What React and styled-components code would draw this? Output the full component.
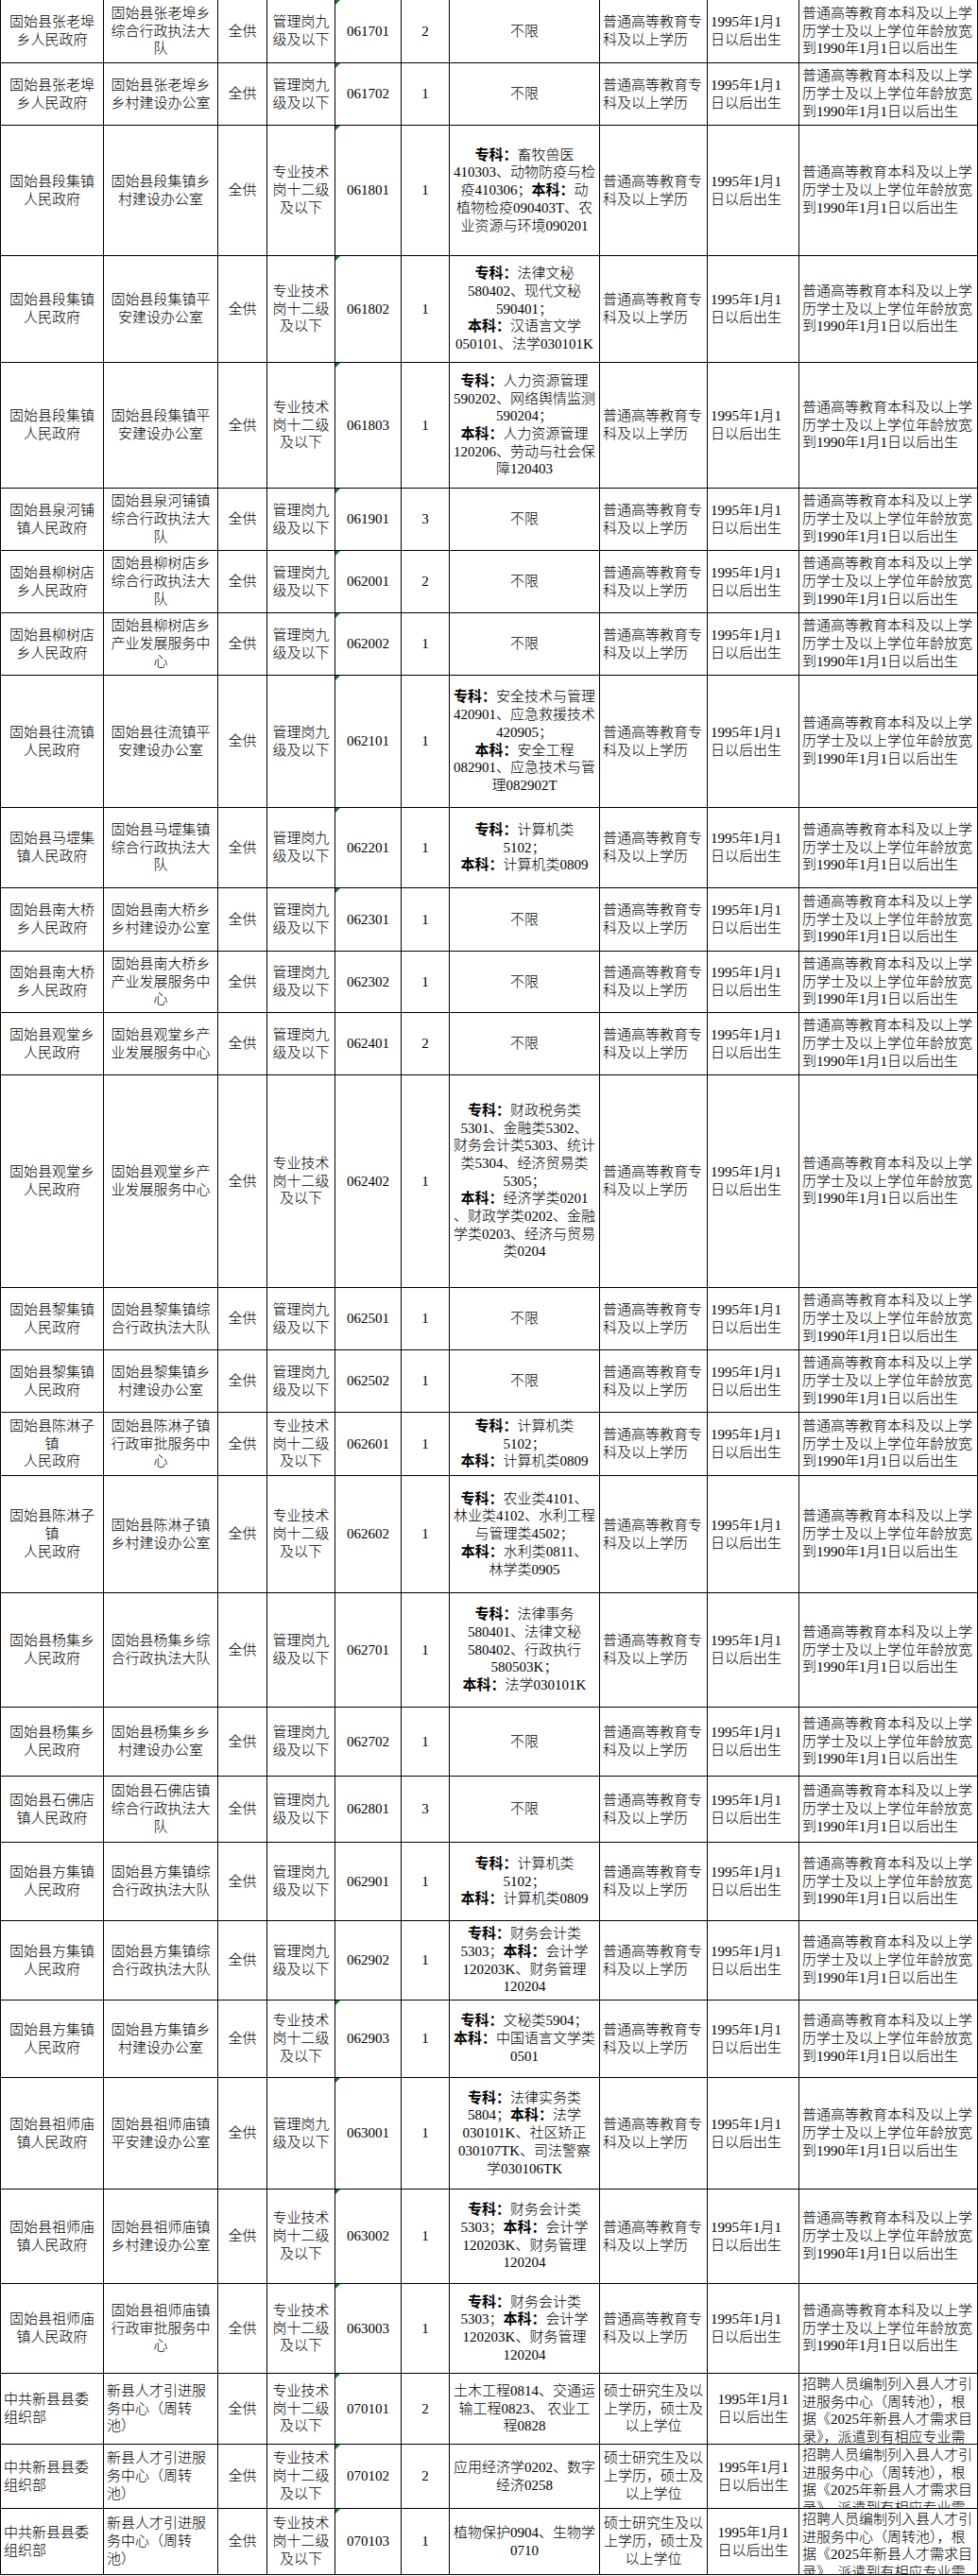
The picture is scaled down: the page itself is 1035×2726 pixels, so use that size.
import styled, { createGlobalStyle, css } from "styled-components";

const GlobalStyle = createGlobalStyle`
  *, *::before, *::after { box-sizing: border-box; }
  body {
    margin: 0;
    background: #fff;
  }
`;

// shared cell texts
const MGMT = ["管理岗九", "级及以下"];
const TECH = ["专业技术", "岗十二级", "及以下"];
const ANY = ["不限"];
const EDU = ["普通高等教育专", "科及以上学历"];
const BORN = ["1995年1月1", "日以后出生"];
const NOTE = ["普通高等教育本科及以上学", "历学士及以上学位年龄放宽", "到1990年1月1日以后出生"];
const EDU_MS = ["硕士研究生及以", "上学历，硕士及", "以上学位"];
const NOTE_POOL = ["招聘人员编制列入县人才引", "进服务中心（周转池），根", "据《2025年新县人才需求目", "录》，派遣到有相应专业需"];

const ZLB = ["固始县张老埠", "乡人民政府"];
const DJZ = ["固始县段集镇", "人民政府"];
const LSD = ["固始县柳树店", "乡人民政府"];
const NDQ = ["固始县南大桥", "乡人民政府"];
const GTX = ["固始县观堂乡", "人民政府"];
const LJZ = ["固始县黎集镇", "人民政府"];
const CLZ = ["固始县陈淋子", "镇", "人民政府"];
const YJX = ["固始县杨集乡", "人民政府"];
const FJZ = ["固始县方集镇", "人民政府"];
const ZSM = ["固始县祖师庙", "镇人民政府"];
const XX = ["中共新县县委", "组织部"];
const POOL = ["新县人才引进服", "务中心（周转", "池）"];

const COMPUTER = ["专科：计算机类", "5102；", "本科：计算机类0809"];
const FINANCE = ["专科：财务会计类", "5303；本科：会计学", "120203K、财务管理", "120204"];

const rows = [
  { h: 67, unit: ZLB, dept: ["固始县张老埠乡", "综合行政执法大", "队"], level: MGMT, code: "061701", n: 2, major: ANY, flag: true },
  { h: 66, unit: ZLB, dept: ["固始县张老埠乡", "乡村建设办公室"], level: MGMT, code: "061702", n: 1, major: ANY, flag: true },
  { h: 138, unit: DJZ, dept: ["固始县段集镇乡", "村建设办公室"], level: TECH, code: "061801", n: 1, flag: true,
    major: ["专科：畜牧兽医", "410303、动物防疫与检", "疫410306；本科：动", "植物检疫090403T、农", "业资源与环境090201"] },
  { h: 113, unit: DJZ, dept: ["固始县段集镇平", "安建设办公室"], level: TECH, code: "061802", n: 1, flag: true,
    major: ["专科：法律文秘", "580402、现代文秘", "590401；", "本科：汉语言文学", "050101、法学030101K"] },
  { h: 133, unit: DJZ, dept: ["固始县段集镇平", "安建设办公室"], level: TECH, code: "061803", n: 1, flag: true,
    major: ["专科：人力资源管理", "590202、网络舆情监测", "590204；", "本科：人力资源管理", "120206、劳动与社会保", "障120403"] },
  { h: 66, unit: ["固始县泉河铺", "镇人民政府"], dept: ["固始县泉河铺镇", "综合行政执法大", "队"], level: MGMT, code: "061901", n: 3, major: ANY, flag: true },
  { h: 66, unit: LSD, dept: ["固始县柳树店乡", "综合行政执法大", "队"], level: MGMT, code: "062001", n: 2, major: ANY, flag: true },
  { h: 66, unit: LSD, dept: ["固始县柳树店乡", "产业发展服务中", "心"], level: MGMT, code: "062002", n: 1, major: ANY, flag: true },
  { h: 140, unit: ["固始县往流镇", "人民政府"], dept: ["固始县往流镇平", "安建设办公室"], level: MGMT, code: "062101", n: 1, flag: true,
    major: ["专科：安全技术与管理", "420901、应急救援技术", "420905；", "本科：安全工程", "082901、应急技术与管", "理082902T"] },
  { h: 85, unit: ["固始县马堽集", "镇人民政府"], dept: ["固始县马堽集镇", "综合行政执法大", "队"], level: MGMT, code: "062201", n: 1, major: COMPUTER, flag: true },
  { h: 67, unit: NDQ, dept: ["固始县南大桥乡", "乡村建设办公室"], level: MGMT, code: "062301", n: 1, major: ANY, flag: true },
  { h: 65, unit: NDQ, dept: ["固始县南大桥乡", "产业发展服务中", "心"], level: MGMT, code: "062302", n: 1, major: ANY },
  { h: 66, unit: GTX, dept: ["固始县观堂乡产", "业发展服务中心"], level: MGMT, code: "062401", n: 2, major: ANY },
  { h: 225, unit: GTX, dept: ["固始县观堂乡产", "业发展服务中心"], level: TECH, code: "062402", n: 1,
    major: ["专科：财政税务类", "5301、金融类5302、", "财务会计类5303、统计", "类5304、经济贸易类", "5305；", "本科：经济学类0201", "、财政学类0202、金融", "学类0203、经济与贸易", "类0204"] },
  { h: 66, unit: LJZ, dept: ["固始县黎集镇综", "合行政执法大队"], level: MGMT, code: "062501", n: 1, major: ANY },
  { h: 66, unit: LJZ, dept: ["固始县黎集镇乡", "村建设办公室"], level: MGMT, code: "062502", n: 1, major: ANY },
  { h: 67, unit: CLZ, dept: ["固始县陈淋子镇", "行政审批服务中", "心"], level: TECH, code: "062601", n: 1, major: COMPUTER },
  { h: 124, unit: CLZ, dept: ["固始县陈淋子镇", "乡村建设办公室"], level: TECH, code: "062602", n: 1,
    major: ["专科：农业类4101、", "林业类4102、水利工程", "与管理类4502；", "本科：水利类0811、", "林学类0905"] },
  { h: 121, unit: YJX, dept: ["固始县杨集乡综", "合行政执法大队"], level: MGMT, code: "062701", n: 1,
    major: ["专科：法律事务", "580401、法律文秘", "580402、行政执行", "580503K；", "本科：法学030101K"] },
  { h: 73, unit: YJX, dept: ["固始县杨集乡乡", "村建设办公室"], level: MGMT, code: "062702", n: 1, major: ANY },
  { h: 70, unit: ["固始县石佛店", "镇人民政府"], dept: ["固始县石佛店镇", "综合行政执法大", "队"], level: MGMT, code: "062801", n: 3, major: ANY },
  { h: 83, unit: FJZ, dept: ["固始县方集镇综", "合行政执法大队"], level: MGMT, code: "062901", n: 1, major: COMPUTER },
  { h: 84, unit: FJZ, dept: ["固始县方集镇综", "合行政执法大队"], level: MGMT, code: "062902", n: 1, major: FINANCE },
  { h: 82, unit: FJZ, dept: ["固始县方集镇乡", "村建设办公室"], level: TECH, code: "062903", n: 1, flag: true,
    major: ["专科：文秘类5904；", "本科：中国语言文学类", "0501"] },
  { h: 118, unit: ZSM, dept: ["固始县祖师庙镇", "平安建设办公室"], level: MGMT, code: "063001", n: 1, flag: true,
    major: ["专科：法律实务类", "5804；本科：法学", "030101K、社区矫正", "030107TK、司法警察", "学030106TK"] },
  { h: 100, unit: ZSM, dept: ["固始县祖师庙镇", "乡村建设办公室"], level: TECH, code: "063002", n: 1, major: FINANCE, flag: true },
  { h: 95, unit: ZSM, dept: ["固始县祖师庙镇", "行政审批服务中", "心"], level: TECH, code: "063003", n: 1, major: FINANCE, flag: true },
  { h: 75, unit: XX, dept: POOL, level: TECH, code: "070101", n: 2, flag: true, pool: true,
    major: ["土木工程0814、交通运", "输工程0823、 农业工", "程0828"] },
  { h: 68, unit: XX, dept: POOL, level: TECH, code: "070102", n: 2, flag: true, pool: true,
    major: ["应用经济学0202、数字", "经济0258"] },
  { h: 70, unit: XX, dept: POOL, level: TECH, code: "070103", n: 1, flag: true, pool: true,
    major: ["植物保护0904、生物学", "0710"] },
];

export default function App() {
  return (
    <>
      <GlobalStyle />
      <Sheet>
        {rows.map((r) => (
          <Row key={r.code} $h={r.h}>
            <Cell $left={r.pool}><Lines lines={r.unit} /></Cell>
            <Cell $left={r.pool}><Lines lines={r.dept} /></Cell>
            <Cell><Lines lines={["全供"]} /></Cell>
            <Cell><Lines lines={r.level} /></Cell>
            <Cell $flag={r.flag}><Lines lines={[r.code]} /></Cell>
            <Cell><Lines lines={[String(r.n)]} /></Cell>
            <Cell><Lines lines={r.major} /></Cell>
            <Cell $left={!r.pool}><Lines lines={r.pool ? EDU_MS : EDU} /></Cell>
            <Cell $left={!r.pool}><Lines lines={BORN} /></Cell>
            <Cell $left $top={r.pool}><Lines lines={r.pool ? NOTE_POOL : NOTE} /></Cell>
          </Row>
        ))}
      </Sheet>
    </>
  );
}

function Lines({ lines }) {
  return lines.map((l, i) => (
    <Line key={i}>
      {l.split(/(专科：|本科：)/).map((part, j) =>
        part === "专科：" || part === "本科：" ? <Label key={j}>{part}</Label> : part
      )}
    </Line>
  ));
}

const Sheet = styled.div`
  width: 1035px;
  border-left: 1px solid #000;
  font-family: "Liberation Serif", "Noto Sans CJK SC", serif;
  font-size: 15px;
  font-weight: 300;
  line-height: 18.7px;
  color: #000;
`;

const Row = styled.div`
  display: grid;
  grid-template-columns: 109px 121px 52px 72px 70px 51px 159px 114px 97px 189px;
  height: ${({ $h }) => $h}px;
`;

const Cell = styled.div`
  position: relative;
  display: flex;
  flex-direction: column;
  justify-content: ${({ $top }) => ($top ? "flex-start" : "center")};
  align-items: ${({ $left }) => ($left ? "flex-start" : "center")};
  padding: ${({ $top }) => ($top ? "2px 3px 0" : "0 3px")};
  min-width: 0;
  border-right: 1px solid #000;
  border-bottom: 1px solid #000;
  overflow: hidden;
  white-space: nowrap;

  ${({ $flag }) =>
    $flag &&
    css`
      &::before {
        content: "";
        position: absolute;
        top: 0;
        left: 0;
        border-top: 5px solid #1c7c1c;
        border-right: 5px solid transparent;
      }
    `}
`;

const Line = styled.span`
  display: block;
  flex-shrink: 0;
`;

const Label = styled.b`
  font-weight: 700;
`;
